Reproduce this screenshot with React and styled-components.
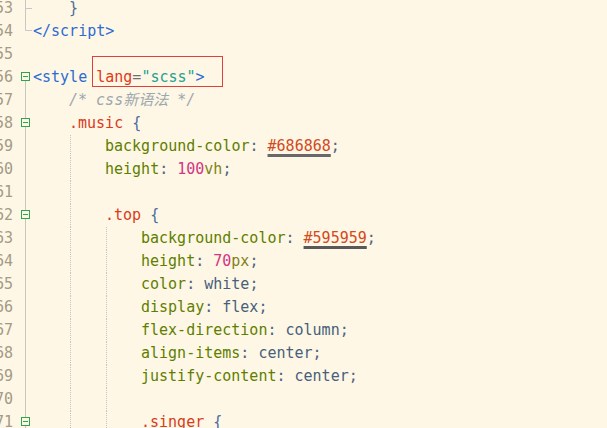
import React from "react";
import styled, { createGlobalStyle } from "styled-components";

const Global = createGlobalStyle`
  html, body { margin: 0; padding: 0; background: #fef7e5; overflow: hidden; }
  body { width: 607px; height: 428px; }
`;

const Editor = styled.div`
  margin-top: -3px;
  display: flex;
  flex-direction: column;
  font-family: "DejaVu Sans Mono", "Liberation Mono", "Noto Sans CJK SC", monospace;
  font-size: 15px;
  line-height: 23px;
  background: #fef7e5;
`;

const Row = styled.div`
  display: flex;
  height: 23px;
  white-space: pre;
`;

const LineNo = styled.div`
  width: 13px;
  flex: none;
  display: flex;
  justify-content: flex-end;
  color: #a39b86;
`;

const Fold = styled.svg`
  width: 20px;
  height: 23px;
  flex: none;
  display: block;
`;

const Code = styled.div`
  position: relative;
  display: flex;
  align-items: flex-start;
  flex: 1;
`;

const Indent = styled.span`
  display: inline-block;
  width: 36px;
  height: 23px;
  flex: none;
  background: ${(p) =>
    p.$guide
      ? "linear-gradient(#c4c4c4 50%, transparent 50%) 1px 0 / 1px 2px repeat-y"
      : "none"};
`;

const colors = {
  tag: "#2c6bd4",
  brace: "#4a6d9e",
  attr: "#e0391c",
  eq: "#707070",
  str: "#25a092",
  comment: "#9ca7af",
  sel: "#d93b1b",
  prop: "#5f7e00",
  punct: "#4b6383",
  val: "#465f7c",
  num: "#d33682",
  unit: "#808217",
  hex: "#d24a1d",
};

const Tok = styled.span`
  color: ${(p) => colors[p.$t]};
  font-style: ${(p) => (p.$t === "comment" ? "italic" : "normal")};
  ${(p) =>
    p.$swatch
      ? `text-decoration: underline; text-decoration-color: ${p.$swatch}; text-decoration-thickness: 3px; text-underline-offset: 3px; text-decoration-skip-ink: none;`
      : ""}
`;

const Mark = styled.div`
  position: absolute;
  left: 59px;
  top: -10px;
  width: 129px;
  height: 29px;
  border: 1px solid #e0403c;
  pointer-events: none;
`;

const LINE = "#c6c6c6";
const GREEN = "#2ea44f";

function FoldMark({ kind }) {
  return (
    <Fold viewBox="0 0 20 23">
      {kind === "tick" && (
        <>
          <line x1="12.5" y1="0" x2="12.5" y2="23" stroke={LINE} />
          <line x1="12.5" y1="11.5" x2="19" y2="11.5" stroke={LINE} />
        </>
      )}
      {kind === "end" && (
        <path d="M12.5 0 V10.5 H19" fill="none" stroke={LINE} />
      )}
      {kind === "line" && <line x1="12.5" y1="0" x2="12.5" y2="23" stroke={LINE} />}
      {(kind === "box" || kind === "boxStart") && (
        <>
          {kind === "box" && <line x1="12.5" y1="0" x2="12.5" y2="6" stroke={LINE} />}
          <line x1="12.5" y1="15" x2="12.5" y2="23" stroke={LINE} />
          <rect x="8.5" y="6.5" width="8" height="8" fill="none" stroke={GREEN} />
          <line x1="10" y1="10.5" x2="15" y2="10.5" stroke={GREEN} />
        </>
      )}
    </Fold>
  );
}

const L = (n, fold, indent, guides, tokens, mark) => ({ n, fold, indent, guides, tokens, mark });

const lines = [
  L(53, "tick", 1, 0, [["brace", "}"]]),
  L(54, "end", 0, 0, [["tag", "</script>"]]),
  L(55, "none", 0, 0, []),
  L(56, "boxStart", 0, 0, [["tag", "<style "], ["attr", "lang"], ["eq", "="], ["str", '"scss"'], ["tag", ">"]], true),
  L(57, "line", 1, 0, [["comment", "/* css新语法 */"]]),
  L(58, "box", 1, 0, [["sel", ".music "], ["brace", "{"]]),
  L(59, "line", 2, 1, [["prop", "background-color"], ["punct", ": "], ["hex", "#686868", "#686868"], ["punct", ";"]]),
  L(60, "line", 2, 1, [["prop", "height"], ["punct", ": "], ["num", "100"], ["unit", "vh"], ["punct", ";"]]),
  L(61, "line", 2, 1, []),
  L(62, "box", 2, 1, [["sel", ".top "], ["brace", "{"]]),
  L(63, "line", 3, 2, [["prop", "background-color"], ["punct", ": "], ["hex", "#595959", "#595959"], ["punct", ";"]]),
  L(64, "line", 3, 2, [["prop", "height"], ["punct", ": "], ["num", "70"], ["unit", "px"], ["punct", ";"]]),
  L(65, "line", 3, 2, [["prop", "color"], ["punct", ": "], ["val", "white"], ["punct", ";"]]),
  L(66, "line", 3, 2, [["prop", "display"], ["punct", ": "], ["val", "flex"], ["punct", ";"]]),
  L(67, "line", 3, 2, [["prop", "flex-direction"], ["punct", ": "], ["val", "column"], ["punct", ";"]]),
  L(68, "line", 3, 2, [["prop", "align-items"], ["punct", ": "], ["val", "center"], ["punct", ";"]]),
  L(69, "line", 3, 2, [["prop", "justify-content"], ["punct", ": "], ["val", "center"], ["punct", ";"]]),
  L(70, "line", 3, 2, []),
  L(71, "box", 3, 2, [["sel", ".singer "], ["brace", "{"]]),
];

export default function App() {
  return (
    <>
      <Global />
      <Editor>
        {lines.map((ln) => (
          <Row key={ln.n}>
            <LineNo>{ln.n}</LineNo>
            <FoldMark kind={ln.fold} />
            <Code>
              {Array.from({ length: ln.indent }).map((_, i) => (
                <Indent key={i} $guide={i >= 1 && i <= ln.guides} />
              ))}
              <span>
                {ln.tokens.map(([t, text, sw], i) => (
                  <Tok key={i} $t={t} $swatch={sw}>
                    {text}
                  </Tok>
                ))}
              </span>
              {ln.mark && <Mark />}
            </Code>
          </Row>
        ))}
      </Editor>
    </>
  );
}
